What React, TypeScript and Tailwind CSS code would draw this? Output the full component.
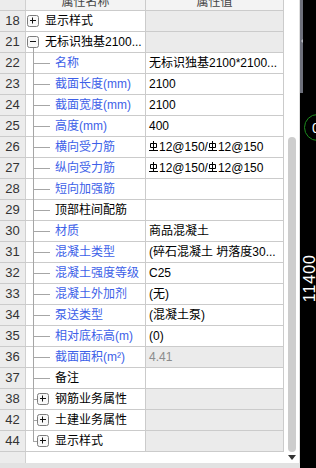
type Kind = 'top' | 'child' | 'sub';

type Item = {
  n: number;
  kind: Kind;
  name: string;
  value?: string;
  blue?: boolean;
  minus?: boolean;
  steel?: boolean;
  shaded?: boolean;
  last?: boolean;
};

const items: Item[] = [
  { n: 18, kind: 'top', name: '显示样式' },
  { n: 21, kind: 'top', name: '无标识独基2100...', minus: true },
  { n: 22, kind: 'child', name: '名称', blue: true, value: '无标识独基2100*2100...' },
  { n: 23, kind: 'child', name: '截面长度(mm)', blue: true, value: '2100' },
  { n: 24, kind: 'child', name: '截面宽度(mm)', blue: true, value: '2100' },
  { n: 25, kind: 'child', name: '高度(mm)', blue: true, value: '400' },
  { n: 26, kind: 'child', name: '横向受力筋', blue: true, steel: true },
  { n: 27, kind: 'child', name: '纵向受力筋', blue: true, steel: true },
  { n: 28, kind: 'child', name: '短向加强筋', blue: true },
  { n: 29, kind: 'child', name: '顶部柱间配筋' },
  { n: 30, kind: 'child', name: '材质', blue: true, value: '商品混凝土' },
  { n: 31, kind: 'child', name: '混凝土类型', blue: true, value: '(碎石混凝土 坍落度30...' },
  { n: 32, kind: 'child', name: '混凝土强度等级', blue: true, value: 'C25' },
  { n: 33, kind: 'child', name: '混凝土外加剂', blue: true, value: '(无)' },
  { n: 34, kind: 'child', name: '泵送类型', blue: true, value: '(混凝土泵)' },
  { n: 35, kind: 'child', name: '相对底标高(m)', blue: true, value: '(0)' },
  { n: 36, kind: 'child', name: '截面面积(m²)', blue: true, value: '4.41', shaded: true },
  { n: 37, kind: 'child', name: '备注' },
  { n: 38, kind: 'sub', name: '钢筋业务属性' },
  { n: 42, kind: 'sub', name: '土建业务属性' },
  { n: 44, kind: 'sub', name: '显示样式', last: true },
];

function ToggleBox({ minus }: { minus?: boolean }) {
  return (
    <svg width="12" height="12" viewBox="0 0 12 12" className="shrink-0">
      <rect x="0.5" y="0.5" width="11" height="11" rx="2" fill="#f8f8f8" stroke="#7c7c7c" />
      <path d="M3 5.5h6" stroke="#111" />
      {!minus && <path d="M5.5 2.5v6" stroke="#111" />}
    </svg>
  );
}

// 三级钢 symbol
function Steel() {
  return (
    <svg width="9" height="11" viewBox="0 0 9 11" className="mb-[2px] inline-block shrink-0">
      <path d="M4.5 0v9M1.5 2.5h6v4h-6zM0 9.5h9" stroke="#000" fill="none" />
    </svg>
  );
}

function NameCell({ it }: { it: Item }) {
  const color = it.blue ? 'text-[#3d5fe8]' : 'text-black';

  if (it.kind === 'top') {
    return (
      <div className="relative flex w-[120px] shrink-0 items-center gap-[6px] border-r border-[#cbcbcb] pl-[1px]">
        {it.minus && <span className="absolute bottom-[-1px] left-[7px] top-[16px] w-px bg-[#a6a6a6]" />}
        <ToggleBox minus={it.minus} />
        <span className="whitespace-nowrap text-black">{it.name}</span>
      </div>
    );
  }

  return (
    <div className="relative flex w-[120px] shrink-0 items-center border-r border-[#cbcbcb] pl-[29px]">
      {/* tree lines */}
      <span
        className={`absolute left-[7px] top-0 w-px bg-[#a6a6a6] ${it.last ? 'h-[10px]' : 'bottom-[-1px]'}`}
      />
      <span
        className={`absolute left-[7px] top-[10px] h-px bg-[#a6a6a6] ${it.kind === 'sub' ? 'w-[4px]' : 'w-[17px]'}`}
      />
      {it.kind === 'sub' && (
        <span className="absolute left-[11px] top-[4px] flex">
          <ToggleBox />
        </span>
      )}
      <span className={`whitespace-nowrap ${it.kind === 'sub' ? 'text-black' : color}`}>{it.name}</span>
    </div>
  );
}

function Row({ it }: { it: Item }) {
  const gray = it.kind !== 'child' || it.shaded;
  return (
    <div className="flex h-[21px] shrink-0 border-b border-[#cbcbcb]">
      <div className="flex w-[26px] shrink-0 items-center justify-center border-r border-[#d0d0d0] bg-[#ececec] text-[13px] text-[#333]">
        {it.n}
      </div>
      <NameCell it={it} />
      <div
        className={`flex w-[138px] shrink-0 items-center whitespace-nowrap border-r border-[#cbcbcb] pl-[3px] ${
          gray ? 'bg-[#ebebeb]' : 'bg-white'
        } ${it.shaded ? 'text-[#8c8c8c]' : 'text-black'}`}
      >
        {it.steel ? (
          <span className="flex items-center">
            <Steel />
            <span className="ml-[1px]">12@150/</span>
            <Steel />
            <span className="ml-[1px]">12@150</span>
          </span>
        ) : (
          it.value
        )}
      </div>
    </div>
  );
}

export default function App() {
  return (
    <div className="flex h-[468px] w-[316px] overflow-hidden bg-black font-['Liberation_Sans','Noto_Sans_CJK_SC',sans-serif] text-[12px]">
      <div className="flex w-[300px] shrink-0 flex-col">
        <div className="flex min-h-0 flex-1 bg-white">
          {/* property grid */}
          <div className="flex w-[284px] shrink-0 flex-col">
            <div className="flex h-[11px] shrink-0 overflow-hidden border-b border-[#cbcbcb] bg-[#f3f3f3] text-[#444]">
              <div className="w-[26px] shrink-0 border-r border-[#d0d0d0] bg-[#ececec]" />
              <div className="flex w-[120px] shrink-0 justify-center border-r border-[#cbcbcb]">
                <span className="mt-[-8px] leading-[20px]">属性名称</span>
              </div>
              <div className="flex w-[138px] shrink-0 justify-center border-r border-[#cbcbcb]">
                <span className="mt-[-8px] leading-[20px]">属性值</span>
              </div>
            </div>
            {items.map((it) => (
              <Row key={it.n} it={it} />
            ))}
            <div className="flex flex-1">
              <div className="w-[26px] border-r border-[#d0d0d0] bg-[#ececec]" />
            </div>
          </div>
          {/* scrollbar */}
          <div className="flex w-[16px] shrink-0 flex-col border-r border-[#dedede] pl-[4px] pt-[137px]">
            <div className="h-[315px] w-[8px] rounded-full bg-[#cdcdcd]" />
            <svg width="8" height="5" viewBox="0 0 8 5" className="mt-[3px]">
              <path d="M0 0h8L4 5z" fill="#333" />
            </svg>
          </div>
        </div>
        <div className="h-[5px] shrink-0 bg-[#e2e2e2]" />
      </div>

      {/* CAD canvas edge */}
      <div className="relative flex-1">
        <div className="absolute left-0 top-0 h-[93px] w-[3px] bg-[#6d707c]" />
        <svg width="16" height="468" className="absolute left-0 top-0">
          <path d="M1 41l2 -2v4z" fill="#b8bac2" />
          <circle cx="17.5" cy="127.5" r="13" fill="none" stroke="#1e8c1e" />
          <text x="12" y="133" fill="#fff" fontSize="14" fontFamily="Liberation Sans">0</text>
        </svg>
        <span className="absolute left-[2px] top-[254px] rotate-180 text-[16px] leading-none tracking-[1px] text-white [writing-mode:vertical-rl]">
          11400
        </span>
      </div>
    </div>
  );
}
